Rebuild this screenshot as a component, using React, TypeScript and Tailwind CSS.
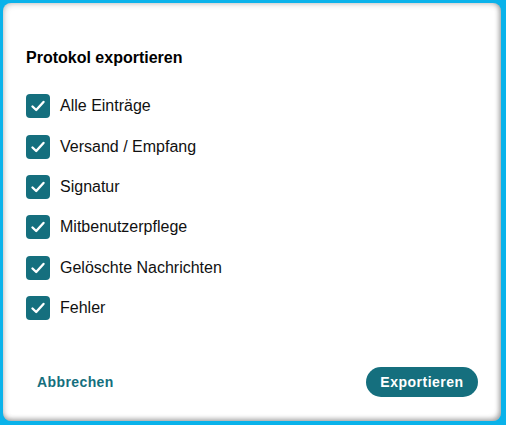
const items = ['Alle Einträge', 'Versand / Empfang', 'Signatur', 'Mitbenutzerpflege', 'Gelöschte Nachrichten', 'Fehler'];

function Check() {
  return (
    <span className="flex h-6 w-6 shrink-0 items-center justify-center rounded-[4px] bg-[#156f7e]">
      <svg width="18" height="18" viewBox="0 0 18 18" fill="none">
        <path d="M3.5 9.5 L7.2 13 L14.5 5" stroke="white" strokeWidth="2.4" strokeLinecap="round" strokeLinejoin="round" />
      </svg>
    </span>
  );
}

export default function App() {
  return (
    <div className="h-[425px] w-[506px] bg-[#0ab2ea] pb-[4px] pl-[3px] pr-[5px] pt-[3px] font-['Liberation_Sans',Arial,sans-serif]">
      <div className="flex h-full w-full flex-col rounded-[8px] bg-white pl-[23px] pr-[23px] pt-[43px] shadow-[inset_-2px_-2px_5px_rgba(0,0,0,0.3),inset_1px_1px_6px_rgba(0,0,0,0.2)]">
        <h2 className="text-[16px] font-bold leading-[24px] text-black">Protokol exportieren</h2>
        <div className="mt-[16px] flex flex-col">
          {items.map((label) => (
            <div key={label} className="flex h-[40.4px] items-center gap-[10px]">
              <Check />
              <span className="text-[16px] leading-[20px] text-[#111]">{label}</span>
            </div>
          ))}
        </div>
        <div className="mt-[39px] flex items-center justify-between">
          <button className="pl-[11px] text-[14px] font-bold tracking-[0.4px] text-[#156f7e]">Abbrechen</button>
          <button className="h-[30px] w-[112px] rounded-full bg-[#156f7e] text-[14px] font-bold tracking-[0.5px] text-white">Exportieren</button>
        </div>
      </div>
    </div>
  );
}
